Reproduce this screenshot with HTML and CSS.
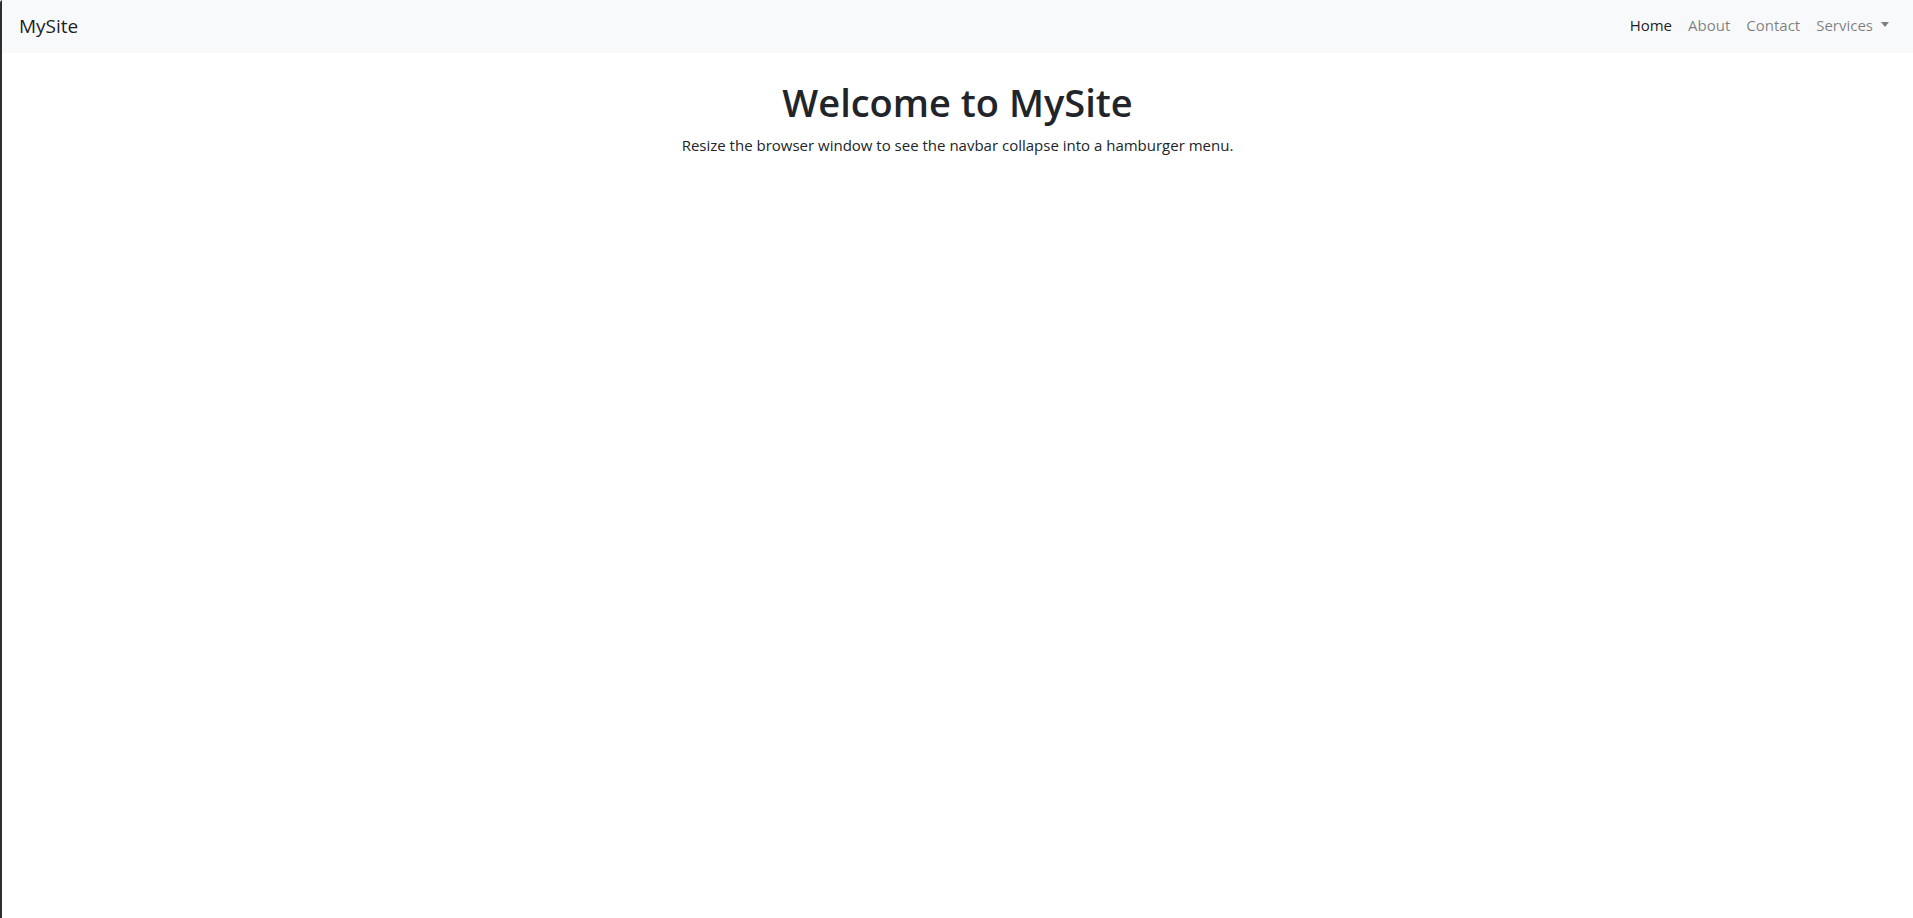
FILE: index.html
```html
<!DOCTYPE html>
<html lang="en">
<head>
<meta charset="utf-8">
<title>MySite</title>
<link rel="stylesheet" href="styles.css">
</head>
<body>
<div class="frame">
  <nav class="navbar">
    <a class="brand" href="#">MySite</a>
    <ul class="nav">
      <li><a class="nav-link active" href="#">Home</a></li>
      <li><a class="nav-link" href="#">About</a></li>
      <li><a class="nav-link" href="#">Contact</a></li>
      <li><a class="nav-link dropdown" href="#">Services<span class="caret"></span></a></li>
    </ul>
  </nav>
  <main class="content">
    <h1 class="title">Welcome to MySite</h1>
    <p class="lead">Resize the browser window to see the navbar collapse into a hamburger menu.</p>
  </main>
</div>
</body>
</html>
```
FILE: styles.css
```css
html, body {
  margin: 0;
  padding: 0;
  height: 100%;
}
body {
  font-family: "Open Sans", "Noto Sans", sans-serif;
  color: #212529;
  background: #ffffff;
}
.frame {
  min-height: 100%;
  box-sizing: border-box;
  border-left: 2px solid #2e2e2e;
  border-top-left-radius: 3px;
}
.navbar {
  display: flex;
  justify-content: space-between;
  align-items: center;
  height: 53px;
  box-sizing: border-box;
  padding: 0 16px 2px 17px;
  background: #f8f9fa;
}
.brand {
  font-size: 19px;
  color: rgba(0, 0, 0, 0.9);
  text-decoration: none;
}
.nav {
  display: flex;
  list-style: none;
  margin: 0 0 2px;
  padding: 0;
}
.nav-link {
  display: block;
  padding: 0 8px;
  font-size: 15px;
  color: rgba(0, 0, 0, 0.5);
  text-decoration: none;
}
.nav-link.active {
  color: rgba(0, 0, 0, 0.9);
}
.caret {
  display: inline-block;
  margin-left: 8px;
  vertical-align: 4px;
  border-top: 5px solid;
  border-left: 4.5px solid transparent;
  border-right: 4.5px solid transparent;
}
.content {
  text-align: center;
  padding-top: 26px;
}
.title {
  margin: 0 0 8px;
  font-size: 38px;
  line-height: 46px;
  font-weight: 600;
}
.lead {
  margin: 0;
  font-size: 15px;
  line-height: 24px;
}
```
